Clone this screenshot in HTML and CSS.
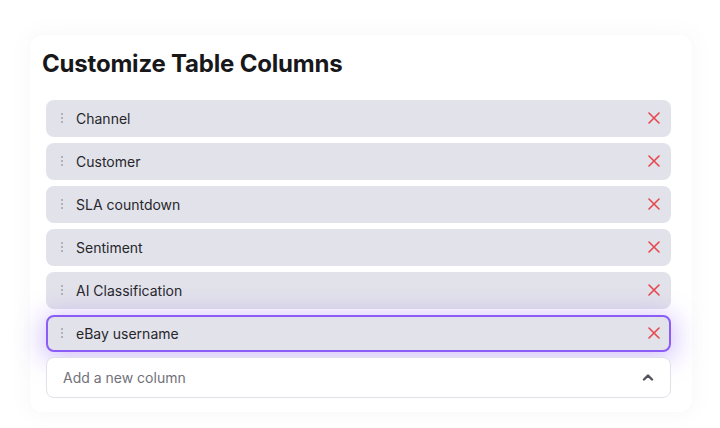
FILE: index.html
```html
<!DOCTYPE html>
<html lang="en">
<head>
<meta charset="utf-8">
<title>Customize Table Columns</title>
<link rel="stylesheet" href="styles.css">
</head>
<body>
<div class="card">
  <h1 class="title">Customize Table Columns</h1>
  <div class="list">
    <div class="row">
      <span class="grip"><i></i><i></i><i></i></span>
      <span class="label">Channel</span>
      <svg class="close" viewBox="0 0 12 12" width="12" height="12"><path d="M1 1L11 11M11 1L1 11"/></svg>
    </div>
    <div class="row">
      <span class="grip"><i></i><i></i><i></i></span>
      <span class="label">Customer</span>
      <svg class="close" viewBox="0 0 12 12" width="12" height="12"><path d="M1 1L11 11M11 1L1 11"/></svg>
    </div>
    <div class="row">
      <span class="grip"><i></i><i></i><i></i></span>
      <span class="label">SLA countdown</span>
      <svg class="close" viewBox="0 0 12 12" width="12" height="12"><path d="M1 1L11 11M11 1L1 11"/></svg>
    </div>
    <div class="row">
      <span class="grip"><i></i><i></i><i></i></span>
      <span class="label">Sentiment</span>
      <svg class="close" viewBox="0 0 12 12" width="12" height="12"><path d="M1 1L11 11M11 1L1 11"/></svg>
    </div>
    <div class="row">
      <span class="grip"><i></i><i></i><i></i></span>
      <span class="label">AI Classification</span>
      <svg class="close" viewBox="0 0 12 12" width="12" height="12"><path d="M1 1L11 11M11 1L1 11"/></svg>
    </div>
    <div class="row active">
      <span class="grip"><i></i><i></i><i></i></span>
      <span class="label">eBay username</span>
      <svg class="close" viewBox="0 0 12 12" width="12" height="12"><path d="M1 1L11 11M11 1L1 11"/></svg>
    </div>
    <div class="add">
      <span class="placeholder">Add a new column</span>
      <svg class="chev" viewBox="0 0 12 8" width="12" height="8"><path d="M2 6.5L6 2.5L10 6.5"/></svg>
    </div>
  </div>
</div>
</body>
</html>
```
FILE: styles.css
```css
* { box-sizing: border-box; }
html, body { margin: 0; padding: 0; background: #ffffff; }
body {
  font-family: Inter, "Liberation Sans", sans-serif;
  width: 720px;
  height: 428px;
  padding: 35px 28px 0 30px;
}
.card {
  background: #ffffff;
  border-radius: 12px;
  height: 377px;
  padding: 15px 21px 0 12px;
  box-shadow: 0 0 4px rgba(0, 0, 0, 0.015), 0 0 20px 8px rgba(0, 0, 0, 0.018);
}
.title {
  margin: 0 0 21px 0;
  font-size: 24px;
  line-height: 28.8px;
  font-weight: 700;
  color: #18181b;
  letter-spacing: -0.2px;
}
.list {
  padding-left: 4px;
  display: flex;
  flex-direction: column;
  gap: 6px;
}
.row {
  height: 37px;
  background: #e2e2ea;
  border-radius: 8px;
  display: flex;
  align-items: center;
  padding: 0 9px 0 13px;
  border: 2px solid transparent;
}
.row.active {
  border-color: #8b5cf6;
  box-shadow: 0 4px 26px 4px rgba(139, 92, 246, 0.36);
}
.grip {
  display: flex;
  flex-direction: column;
  gap: 2px;
  width: 2px;
  margin-right: 13px;
}
.grip i {
  display: block;
  width: 2px;
  height: 2px;
  border-radius: 1px;
  background: #a1a1aa;
}
.label {
  flex: 1;
  font-size: 14px;
  color: #27272a;
}
.close {
  fill: none;
  stroke: #e5484d;
  stroke-width: 1.6;
  stroke-linecap: round;
}
.add {
  margin-top: -1px;
  height: 41px;
  background: #ffffff;
  border: 1px solid #e2e1e8;
  border-radius: 8px;
  display: flex;
  align-items: center;
  padding: 0 16px 0 16px;
  position: relative;
}
.placeholder {
  flex: 1;
  font-size: 14px;
  color: #71717a;
}
.chev {
  fill: none;
  stroke: #52525b;
  stroke-width: 2.4;
  stroke-linecap: round;
  stroke-linejoin: round;
}
```
